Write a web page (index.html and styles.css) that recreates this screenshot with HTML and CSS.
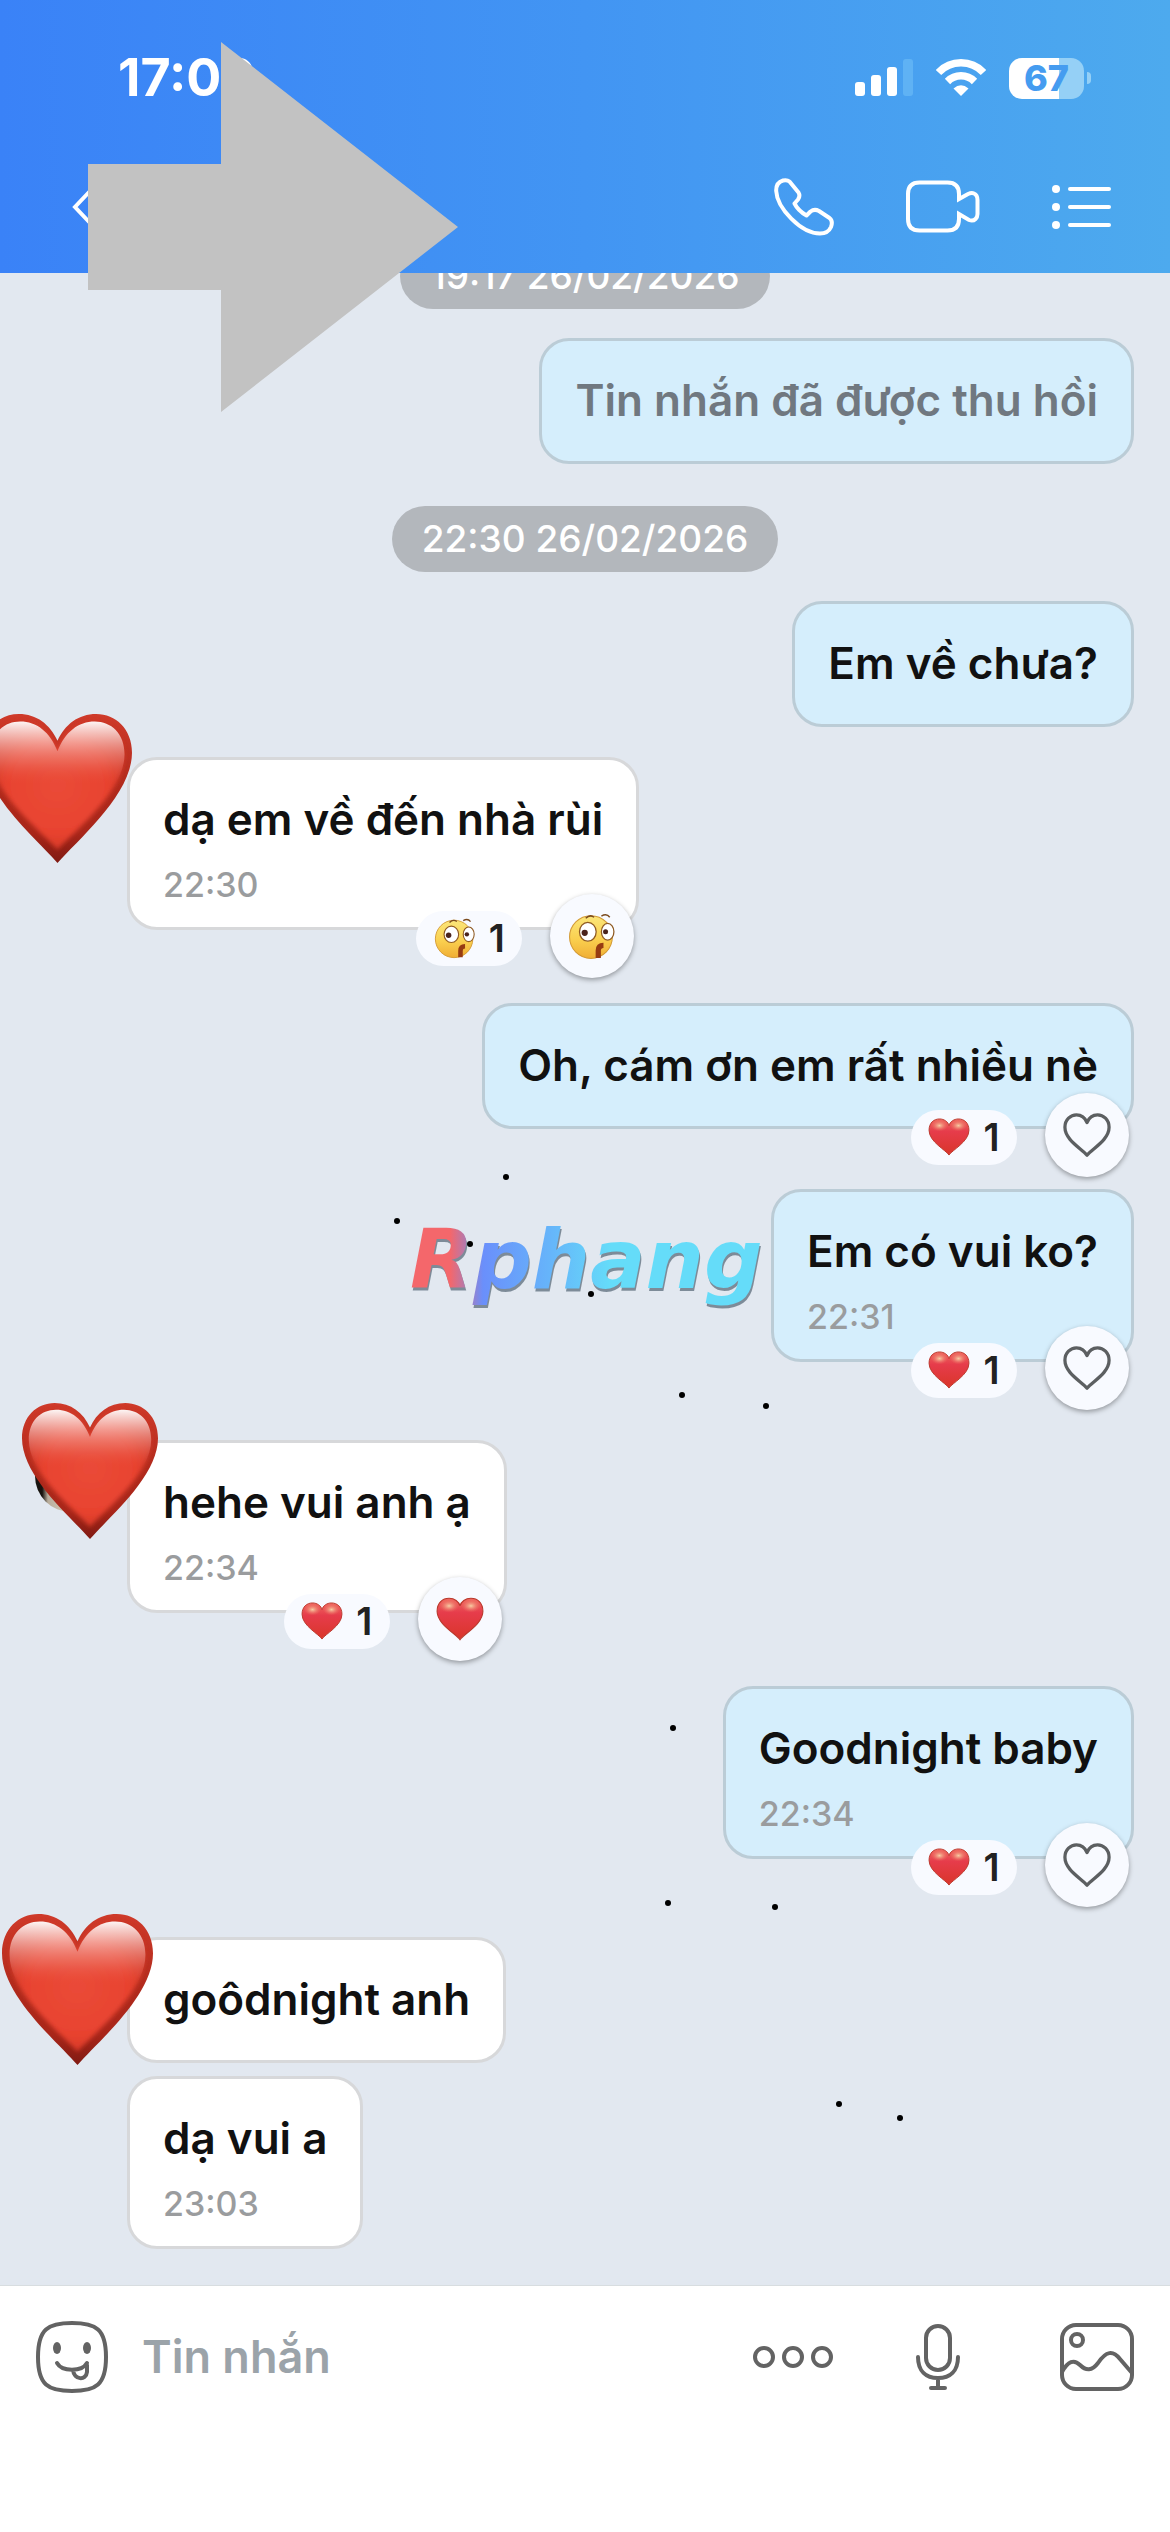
FILE: index.html
```html
<!DOCTYPE html>
<html lang="vi">
<head>
<meta charset="utf-8">
<meta name="viewport" content="width=device-width, initial-scale=1">
<title>Tin nhắn</title>
<link rel="stylesheet" href="styles.css">
</head>
<body>
<svg class="defs" width="0" height="0" aria-hidden="true">
  <defs>
    <linearGradient id="heart-edge" x1="0" y1="0" x2="0" y2="1">
      <stop offset="0" stop-color="#cf3a2a"/>
      <stop offset="0.5" stop-color="#b02a1c"/>
      <stop offset="0.8" stop-color="#a8261a"/>
      <stop offset="1" stop-color="#801a12"/>
    </linearGradient>
    <radialGradient id="heart-body" cx="0.5" cy="0.5" r="0.62">
      <stop offset="0" stop-color="#ea4a38"/>
      <stop offset="0.6" stop-color="#e8432f"/>
      <stop offset="1" stop-color="#c52f20"/>
    </radialGradient>
    <linearGradient id="heart-shine" x1="0" y1="0" x2="0" y2="1">
      <stop offset="0" stop-color="#fff" stop-opacity="0.95"/>
      <stop offset="0.12" stop-color="#fbd9d5" stop-opacity="0.75"/>
      <stop offset="0.32" stop-color="#f0897d" stop-opacity="0.45"/>
      <stop offset="0.5" stop-color="#ea4a38" stop-opacity="0"/>
    </linearGradient>
    <filter id="soft" x="-10%" y="-10%" width="120%" height="120%"><feGaussianBlur stdDeviation="1.4"/></filter>
    <symbol id="big-heart" viewBox="0 0 100 100">
      <path fill="url(#heart-edge)" d="M50 100C36 84 0 54 0 26C0 10 11 0 24 0C36 0 45 7 50 18C55 7 64 0 76 0C89 0 100 10 100 26C100 54 64 84 50 100Z"/>
      <path fill="url(#heart-body)" filter="url(#soft)" d="M50 91C36 76 5 52 5 27C5 13 14 5 25 5C36 5 45 12 50 25C55 12 64 5 75 5C86 5 95 13 95 27C95 52 64 76 50 91Z"/>
      <path fill="url(#heart-shine)" d="M50 90C38 76 5 52 5 27C5 13 14 5 25 5C36 5 45 12 50 25C55 12 64 5 75 5C86 5 95 13 95 27C95 52 62 76 50 90Z"/>
    </symbol>
    <linearGradient id="small-fill" x1="0" y1="0" x2="0" y2="1">
      <stop offset="0" stop-color="#ef6a60"/>
      <stop offset="0.35" stop-color="#e63c4b"/>
      <stop offset="1" stop-color="#d93529"/>
    </linearGradient>
    <radialGradient id="small-shine">
      <stop offset="0" stop-color="#f8d5a8" stop-opacity="0.95"/>
      <stop offset="1" stop-color="#ee7a68" stop-opacity="0"/>
    </radialGradient>
    <symbol id="small-heart" viewBox="0 0 44 40">
      <path fill="url(#small-fill)" stroke="#b9382b" stroke-width="1" d="M22 39C19 34 1 25 1 13C1 5 6 1 12 1C17 1 21 4 22 8C23 4 27 1 32 1C38 1 43 5 43 13C43 25 25 34 22 39Z"/>
      <ellipse cx="12" cy="8" rx="9" ry="6" fill="url(#small-shine)"/>
      <ellipse cx="32" cy="8" rx="9" ry="6" fill="url(#small-shine)"/>
    </symbol>
    <symbol id="line-heart" viewBox="0 0 50 46">
      <path fill="none" stroke="#5c5f61" stroke-width="3.4" stroke-linejoin="round" d="M25 44C19 37 2 28 2 15C2 7 8 2 14 2C19 2 23 5 25 10C27 5 31 2 36 2C42 2 48 7 48 15C48 28 31 37 25 44Z"/>
    </symbol>
    <linearGradient id="face-fill" x1="0" y1="0" x2="0" y2="1">
      <stop offset="0" stop-color="#fbe67a"/>
      <stop offset="0.55" stop-color="#fad04f"/>
      <stop offset="1" stop-color="#f0ae35"/>
    </linearGradient>
    <symbol id="face" viewBox="0 0 46 46">
      <circle cx="22" cy="24" r="20.5" fill="url(#face-fill)" stroke="#d39a35" stroke-width="1"/>
      <ellipse cx="19" cy="19" rx="8" ry="9" fill="#fff" stroke="#8f5a22" stroke-width="1.2"/>
      <ellipse cx="38" cy="19" rx="6" ry="8" fill="#fff" stroke="#8f5a22" stroke-width="1.2"/>
      <circle cx="16" cy="20" r="3" fill="#4a231c"/>
      <circle cx="36" cy="19" r="2.4" fill="#4a231c"/>
      <path fill="none" stroke="#7a4a1d" stroke-width="1.4" d="M17 6Q21 2 25 5M32 4Q37 1 40 5"/>
      <path fill="none" stroke="#963b12" stroke-width="5" d="M34 32Q29 32 29 37V44"/>
    </symbol>
  </defs>
</svg>

<main class="app">
  <header class="top">
    <div class="status">
      <time class="clock">17:06</time>
      <div class="status-icons">
        <svg width="58" height="38" viewBox="0 0 58 38" fill="#fff" aria-label="Sóng">
          <rect x="0" y="23" width="10" height="14" rx="3"/>
          <rect x="16" y="16" width="10" height="21" rx="3"/>
          <rect x="32" y="8" width="10" height="29" rx="3"/>
          <rect x="48" y="0" width="10" height="37" rx="3" fill="#5fb2f4"/>
        </svg>
        <svg width="50" height="38" viewBox="0 0 50 38" aria-label="Wi-Fi">
          <path fill="none" stroke="#fff" stroke-width="7.5" d="M2.500 13.500A31 31 0 0 1 47.500 13.500M11.500 22.500A19 19 0 0 1 38.500 22.500"/>
          <path fill="#fff" d="M25 37L17.500 29.500Q25 23 32.500 29.500Z"/>
        </svg>
        <div class="battery"><span class="battery-level">67</span></div>
      </div>
    </div>
    <nav class="bar">
      <button class="icon-btn" aria-label="Quay lại">
        <svg width="20" height="38" viewBox="0 0 20 38" fill="none" stroke="#fff" stroke-width="4"><path d="M19 2L3 19L19 36"/></svg>
      </button>
      <div class="actions">
        <button class="icon-btn" aria-label="Gọi thoại">
          <svg width="60" height="58" viewBox="0 0 60 58" fill="none" stroke="#fff" stroke-width="4" stroke-linejoin="round"><path d="M15.500 3.500Q13 1.500 9 2.500C4 4 2 8 2.200 13C3 30 27 55.500 46 55.500C51 55.500 55 53.500 57 49C58.500 45 58 42 55.500 40L45 33Q40.500 30.500 36.500 33.500L32.500 37.500Q24 32.500 20.500 25.500L24 21.500Q26.500 18 24.500 14.500Z"/></svg>
        </button>
        <button class="icon-btn" aria-label="Gọi video">
          <svg width="74" height="54" viewBox="0 0 74 54" fill="none" stroke="#fff" stroke-width="4" stroke-linejoin="miter"><path d="M53 19V14Q53 2.500 41.500 2.500H13.500Q2 2.500 2 14V39Q2 50.500 13.500 50.500H41.500Q53 50.500 53 39V34L63 40Q67 41.500 69.500 39Q71.500 37 71.500 34V20Q71.500 15 68 13.500Q65.500 12.500 62 14Z"/></svg>
        </button>
        <button class="icon-btn" aria-label="Tùy chọn">
          <svg width="60" height="46" viewBox="0 0 60 46" fill="#fff"><circle cx="4" cy="5" r="4"/><circle cx="4" cy="23" r="4"/><circle cx="4" cy="41" r="4"/><rect x="16" y="3" width="43" height="4" rx="2"/><rect x="16" y="21" width="43" height="4" rx="2"/><rect x="16" y="39" width="43" height="4" rx="2"/></svg>
        </button>
      </div>
    </nav>
  </header>

  <section class="chat">
    <time class="day day-cut">19:17 26/02/2026</time>
    <article class="row out"><div class="bubble recalled"><p>Tin nhắn đã được thu hồi</p></div></article>
    <time class="day">22:30 26/02/2026</time>
    <article class="row out"><div class="bubble"><p>Em về chưa?</p></div></article>
    <article class="row in gap-m">
      <div class="bubble"><p>dạ em về đến nhà rùi</p><time>22:30</time>
        <div class="reacts"><span class="count"><svg width="42" height="42"><use href="#face"/></svg>1</span><button class="react" aria-label="Bày tỏ cảm xúc"><svg width="48" height="48"><use href="#face"/></svg></button></div>
      </div>
    </article>
    <article class="row out gap-l">
      <div class="bubble"><p>Oh, cám ơn em rất nhiều nè</p>
        <div class="reacts"><span class="count"><svg width="42" height="38"><use href="#small-heart"/></svg>1</span><button class="react" aria-label="Bày tỏ cảm xúc"><svg width="48" height="46"><use href="#line-heart"/></svg></button></div>
      </div>
    </article>
    <article class="row out gap-n">
      <div class="bubble"><p>Em có vui ko?</p><time>22:31</time>
        <div class="reacts"><span class="count"><svg width="42" height="38"><use href="#small-heart"/></svg>1</span><button class="react" aria-label="Bày tỏ cảm xúc"><svg width="48" height="46"><use href="#line-heart"/></svg></button></div>
      </div>
    </article>
    <article class="row in gap-xl">
      <span class="avatar"></span>
      <div class="bubble"><p>hehe vui anh ạ</p><time>22:34</time>
        <div class="reacts"><span class="count"><svg width="42" height="38"><use href="#small-heart"/></svg>1</span><button class="react" aria-label="Bày tỏ cảm xúc"><svg width="48" height="44"><use href="#small-heart"/></svg></button></div>
      </div>
    </article>
    <article class="row out gap-l">
      <div class="bubble"><p>Goodnight baby</p><time>22:34</time>
        <div class="reacts"><span class="count"><svg width="42" height="38"><use href="#small-heart"/></svg>1</span><button class="react" aria-label="Bày tỏ cảm xúc"><svg width="48" height="46"><use href="#line-heart"/></svg></button></div>
      </div>
    </article>
    <article class="row in gap-xl"><div class="bubble"><p>goôdnight anh</p></div></article>
    <article class="row in gap-s"><div class="bubble"><p>dạ vui a</p><time>23:03</time></div></article>
  </section>

  <footer class="composer">
    <button class="icon-btn" aria-label="Biểu cảm">
      <svg width="72" height="72" viewBox="0 0 72 72" fill="none" stroke="#636363" stroke-width="4"><path d="M36 2C60 2 70 8 70 36S60 70 36 70S2 64 2 36S12 2 36 2Z"/><path stroke-linecap="round" d="M21 42C26 51 46 51 51 42M37 49C38 59 50 60 51 51V44"/><ellipse cx="21" cy="27" rx="4" ry="6" fill="#636363" stroke="none"/><ellipse cx="51" cy="27" rx="4" ry="6" fill="#636363" stroke="none"/></svg>
    </button>
    <input class="field" type="text" placeholder="Tin nhắn" aria-label="Tin nhắn">
    <div class="tools">
      <button class="icon-btn" aria-label="Thêm">
        <svg width="82" height="24" viewBox="0 0 82 24" fill="none" stroke="#636363" stroke-width="4"><circle cx="12" cy="12" r="9"/><circle cx="41" cy="12" r="9"/><circle cx="70" cy="12" r="9"/></svg>
      </button>
      <button class="icon-btn mic" aria-label="Ghi âm">
        <svg width="44" height="68" viewBox="0 0 44 68" fill="none" stroke="#636363" stroke-width="4" stroke-linecap="round"><rect x="10" y="3" width="24" height="44" rx="12"/><path d="M2 34C2 48 10 55 22 55S42 48 42 34M22 55V64M15 65H29"/></svg>
      </button>
      <button class="icon-btn" aria-label="Ảnh">
        <svg width="74" height="68" viewBox="0 0 74 68" fill="none" stroke="#636363" stroke-width="4"><rect x="2" y="2" width="70" height="64" rx="14"/><circle cx="17" cy="17" r="6"/><path d="M2 49C8 38 14 36 20 42C26 48 32 48 38 40C46 28 53 27 60 36L72 50"/></svg>
      </button>
    </div>
  </footer>

  <div class="stickers" aria-hidden="true">
    <svg class="sticker heart-a"><use href="#big-heart"/></svg>
    <svg class="sticker heart-b"><use href="#big-heart"/></svg>
    <svg class="sticker heart-c"><use href="#big-heart"/></svg>
    <svg class="sticker arrow" viewBox="0 0 370 370"><path fill="#c2c2c2" d="M0 122H133V0L370 185L133 370V248H0Z"/></svg>
    <span class="sticker brand">Rphang</span>
    <svg class="sticker specks" width="520" height="970" viewBox="0 0 520 970"><circle cx="116" cy="17" r="3"/><circle cx="7" cy="61" r="3"/><circle cx="80" cy="84" r="3"/><circle cx="201" cy="134" r="3"/><circle cx="292" cy="235" r="3"/><circle cx="376" cy="246" r="3"/><circle cx="283" cy="568" r="3"/><circle cx="278" cy="743" r="3"/><circle cx="385" cy="747" r="3"/><circle cx="449" cy="944" r="3"/><circle cx="510" cy="958" r="3"/></svg>
  </div>
</main>
</body>
</html>
```
FILE: styles.css
```css
* { box-sizing: border-box; }
body { margin: 0; font-family: Inter, "Liberation Sans", sans-serif; background: #fff; }
p { margin: 0; }
svg { display: block; }
.defs { position: absolute; }
.app { position: relative; min-height: 100vh; display: flex; flex-direction: column; overflow: hidden; }

.top { position: relative; z-index: 1; height: 273px; background: linear-gradient(90deg, #3a82f7, #4295f3 50%, #4daaee); color: #fff; }
.status { display: flex; justify-content: space-between; align-items: center; padding: 48px 86px 0 118px; }
.clock { font-size: 52px; line-height: 60px; font-weight: 700; }
.status-icons { display: flex; align-items: center; gap: 23px; }
.battery { position: relative; display: grid; place-items: center; width: 75px; height: 41px; border-radius: 13px; background: linear-gradient(90deg, #fff 67%, #95d0f6 67%); }
.battery::after { content: ""; position: absolute; left: 78px; top: 14px; width: 4px; height: 12px; border-radius: 0 4px 4px 0; background: #95d0f6; }
.battery-level { font-size: 36px; line-height: 41px; font-weight: 800; color: #459cf0; }
.bar { display: flex; justify-content: space-between; align-items: center; height: 64px; margin-top: 67px; padding: 0 58px 0 72px; }
.actions { display: flex; align-items: center; gap: 72px; }
.icon-btn { padding: 0; border: 0; background: none; flex: none; }

.chat { display: flex; flex-direction: column; flex: none; padding: 0 36px; padding-bottom: 36px; background: #e2e8f0; }
.day { align-self: center; margin: 42px 0 29px; padding: 0 30px; border-radius: 33px; background: #b3b7bc; color: #fff; font-size: 37px; line-height: 66px; font-weight: 500; }
.day-cut { margin: -30px 0 29px; }
.row { display: flex; align-items: flex-start; }
.out { justify-content: flex-end; }
.in { padding-left: 91px; }
.gap-s { margin-top: 13px; }
.gap-m { margin-top: 30px; }
.gap-n { margin-top: 60px; }
.gap-l { margin-top: 73px; }
.gap-xl { margin-top: 78px; }
.bubble { position: relative; padding: 32px 33px 34px; border: 3px solid #d7d8da; border-radius: 30px; background: #fff; color: #111; }
.out .bubble { background: #d5eefc; border-color: #bbccd6; }
.bubble p { font-size: 44px; line-height: 54px; font-weight: 600; }
.bubble time { display: block; margin-top: 15px; margin-bottom: -16px; font-size: 34px; line-height: 48px; font-weight: 500; color: #9a9c9e; }
.bubble.recalled { color: #707880; }
.avatar { flex: none; width: 72px; height: 72px; margin: 0 20px 0 -92px; border-radius: 50%; background: linear-gradient(90deg, #17130f 10%, #b9ad9c 18%, #d9cfbd 50%); }

.reacts { position: absolute; right: 2px; bottom: -51px; display: flex; align-items: center; gap: 28px; }
.count { display: flex; align-items: center; justify-content: center; gap: 13px; width: 106px; height: 55px; margin-top: 4px; border-radius: 28px; background: #f8faff; color: #222; font-size: 38px; line-height: 55px; font-weight: 600; }
.react { display: grid; place-items: center; width: 84px; height: 84px; padding: 0; border: 0; border-radius: 50%; background: #f8faff; box-shadow: 0 2px 5px rgba(0, 0, 0, 0.35); }

.composer { display: flex; align-items: center; flex: 1; padding: 0 36px 105px; border-top: 1px solid #d8dde0; background: #fff; }
.field { flex: 1; min-width: 0; margin-left: 34px; padding: 0; border: 0; outline: 0; background: none; font: 600 45px/60px Inter, "Liberation Sans", sans-serif; color: #111; }
.field::placeholder { color: #9ba3a9; opacity: 1; }
.tools { display: flex; align-items: center; gap: 82px; }
.mic { margin-right: 18px; }

.sticker { position: absolute; z-index: 2; }
.heart-a { left: -17px; top: 714px; width: 149px; height: 149px; }
.heart-b { left: 22px; top: 1403px; width: 136px; height: 136px; }
.heart-c { left: 2px; top: 1914px; width: 151px; height: 151px; }
.arrow { left: 88px; top: 42px; width: 370px; height: 370px; }
.specks { left: 390px; top: 1160px; }
.brand { left: 410px; top: 1212px; padding-right: 12px; font: italic 700 82px/96px "DejaVu Sans", sans-serif; color: transparent; background: linear-gradient(90deg, #f4676b 11%, #6a8ffb 20%, #66b4fa 38%, #65dcf9 55%); -webkit-background-clip: text; background-clip: text; filter: drop-shadow(1px 3px 0 #7d8b98); }
```
